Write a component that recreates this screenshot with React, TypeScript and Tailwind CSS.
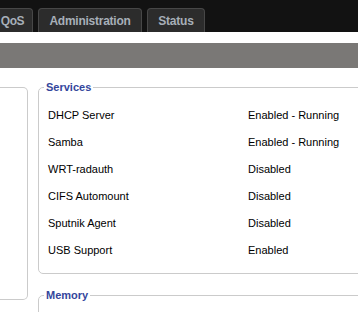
import React from "react";

const rows: [string, string][] = [
  ["DHCP Server", "Enabled - Running"],
  ["Samba", "Enabled - Running"],
  ["WRT-radauth", "Disabled"],
  ["CIFS Automount", "Disabled"],
  ["Sputnik Agent", "Disabled"],
  ["USB Support", "Enabled"],
];

export default function App() {
  return (
    <div
      className="w-[358px] h-[312px] overflow-hidden bg-white"
      style={{ fontFamily: '"Liberation Sans", Arial, sans-serif' }}
    >
      {/* top nav */}
      <div className="h-[32px] bg-[#121212] flex items-end gap-[5px]">
        <div className="-ml-[20px] w-[53px] h-[24px] bg-[#2c2c2c] border border-b-0 border-[#474747] rounded-t-[4px] flex items-center justify-end pr-[8px] text-[12px] font-bold text-[#a7afb8] tracking-[-0.5px]">
          QoS
        </div>
        <div className="w-[104px] h-[24px] bg-[#2c2c2c] border border-b-0 border-[#474747] rounded-t-[4px] flex items-center justify-center text-[12px] font-bold text-[#a7afb8] tracking-[-0.25px]">
          Administration
        </div>
        <div className="w-[58px] h-[24px] bg-[#2c2c2c] border border-b-0 border-[#474747] rounded-t-[4px] flex items-center justify-center text-[12px] font-bold text-[#a7afb8] tracking-[-0.2px]">
          Status
        </div>
      </div>
      <div className="mt-[11px] h-[25px] bg-[#7a7876]" />

      <div className="mt-[12px] flex gap-[10px]">
        <div className="mt-[7px] w-[28px] h-[213px] border border-l-0 border-[#cbcbcb] rounded-r-[5px] shrink-0" />
        <div className="w-[340px] shrink-0 flex flex-col">
          <fieldset className="border border-[#cbcbcb] rounded-[5px] px-[9px] pt-[8px] pb-[9px]">
            <legend className="-ml-[4px] px-[2px] text-[11px] leading-[14px] font-bold text-[#34469c]">
              Services
            </legend>
            <div className="flex flex-col text-[11px] text-black">
              {rows.map(([k, v]) => (
                <div key={k} className="flex h-[27px] items-center">
                  <div className="w-[200px]">{k}</div>
                  <div>{v}</div>
                </div>
              ))}
            </div>
          </fieldset>
          <fieldset className="mt-[14px] border border-[#cbcbcb] rounded-[5px] px-[9px] h-[60px]">
            <legend className="-ml-[4px] px-[2px] text-[11px] leading-[14px] font-bold text-[#34469c]">
              Memory
            </legend>
          </fieldset>
        </div>
      </div>
    </div>
  );
}
